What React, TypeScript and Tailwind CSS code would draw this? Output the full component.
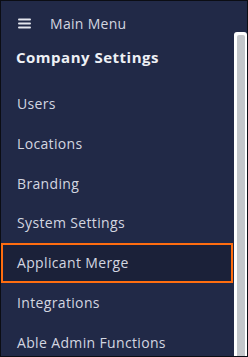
const items = [
  'Users',
  'Locations',
  'Branding',
  'System Settings',
  'Applicant Merge',
  'Integrations',
  'Able Admin Functions',
];

export default function App() {
  return (
    <div className="w-[248px] h-[357px] bg-[#0b0d14] p-px">
      <div className="relative h-full w-full bg-[#212947] overflow-hidden font-['Open_Sans',sans-serif]">
        {/* Header */}
        <div className="flex items-center h-[44px] pl-[17px]">
          <svg width="13" height="11" viewBox="0 0 13 11" className="text-[#e4e6ee]">
            <rect x="0" y="0.5" width="13" height="2" rx="1" fill="currentColor" />
            <rect x="0" y="4.5" width="13" height="2" rx="1" fill="currentColor" />
            <rect x="0" y="8.5" width="13" height="2" rx="1" fill="currentColor" />
          </svg>
          <span className="ml-[19px] text-[14px] text-[#d3d6e0] tracking-[0.3px]">Main Menu</span>
        </div>
        <div className="pl-[15px] h-[24px] flex items-center text-[15px] font-bold text-[#eef0f5] tracking-[0.5px]">
          Company Settings
        </div>

        {/* Items */}
        <div className="flex flex-col mt-[15px] pr-[14px]">
          {items.map((it) => (
            <div
              key={it}
              className={
                it === 'Applicant Merge'
                  ? 'h-[40px] flex items-center pl-[14px] border-[2.5px] border-[#ff6d10] bg-[#1b2139] text-[14px] tracking-[0.35px] text-[#d3d6e0]'
                  : 'h-[39.7px] flex items-center pl-[16px] text-[14px] tracking-[0.35px] text-[#d3d6e0]'
              }
            >
              {it}
            </div>
          ))}
        </div>

        {/* Scrollbar */}
        <div className="absolute right-0 top-[31px] bottom-0 w-[13px] bg-white rounded-t-[3px] pl-[3px] pr-[2px] pt-[3px]">
          <div className="h-full w-full bg-[#c3c6ca] rounded-t-[2px]" />
        </div>
      </div>
    </div>
  );
}
